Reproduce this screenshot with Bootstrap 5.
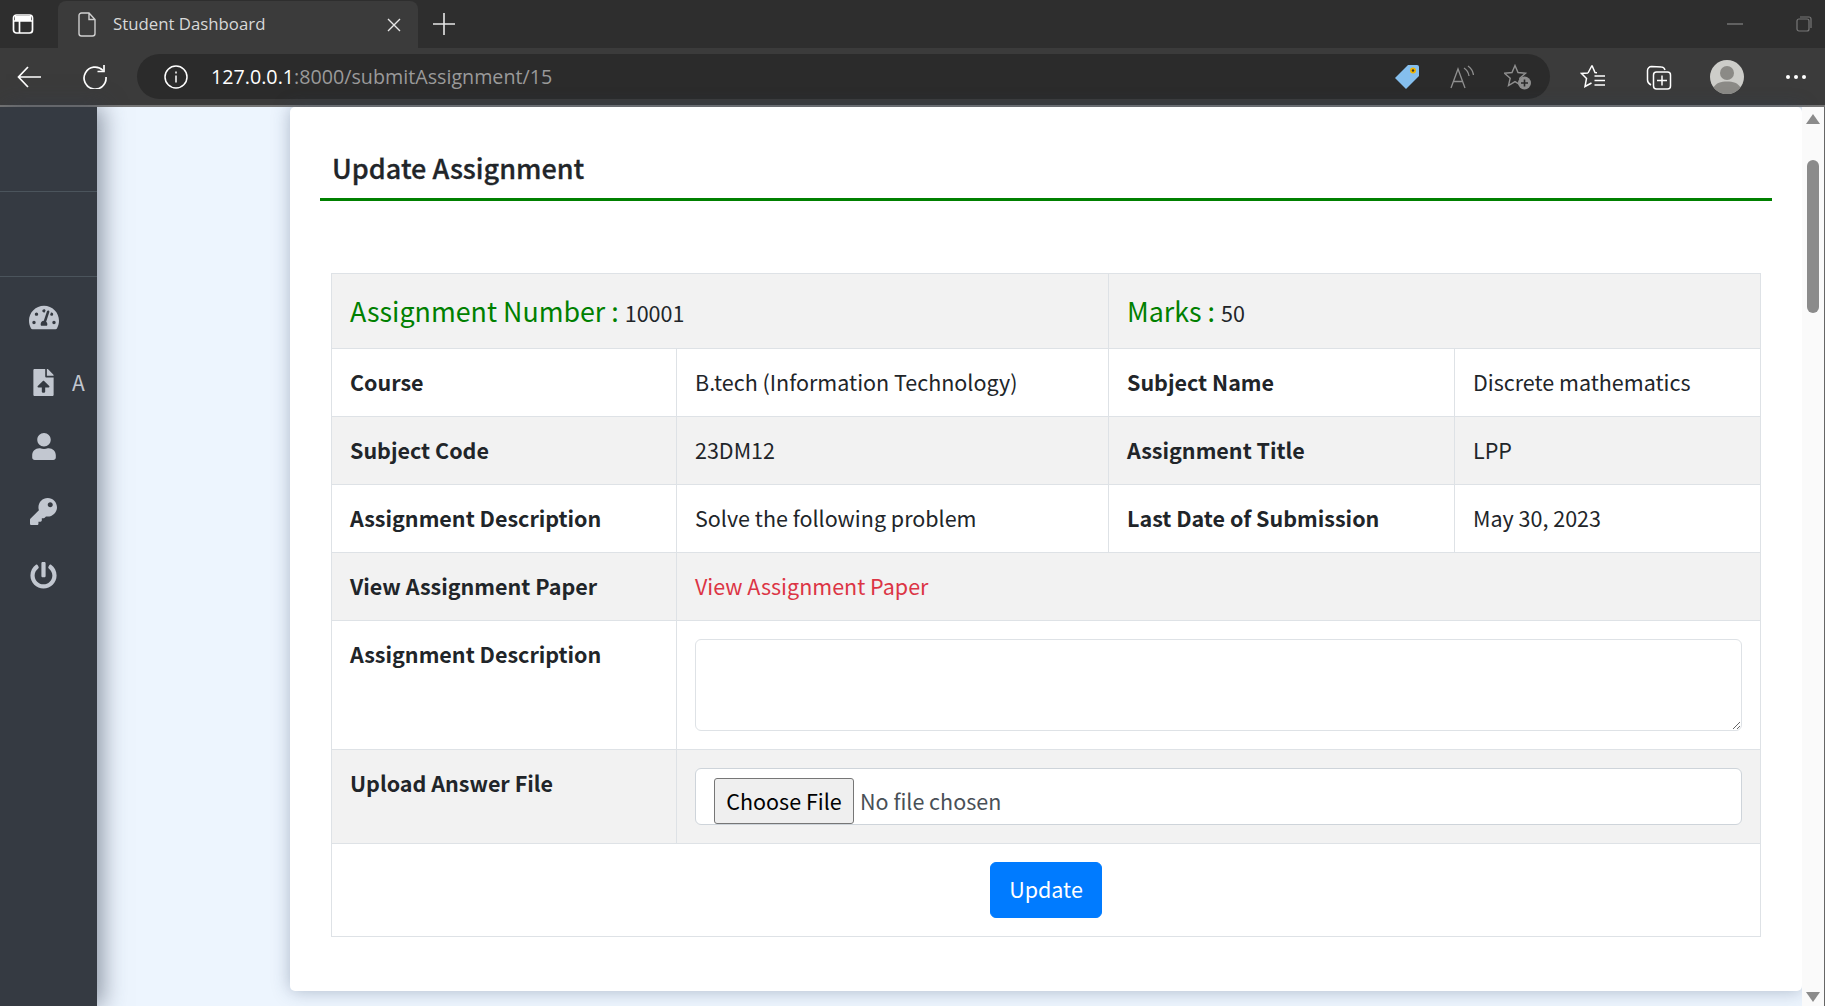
<!DOCTYPE html>
<html lang="en">
<head>
  <meta charset="UTF-8">
  <title>Student Dashboard</title>
  <link href="https://cdn.jsdelivr.net/npm/bootstrap@5.3.3/dist/css/bootstrap.min.css" rel="stylesheet">
  <style>
    html, body { height: 100%; }
    body { overflow: hidden; background: #edf5fe; font-family: "Noto Sans CJK SC", "Source Sans Pro", sans-serif; color: #212529; }

    /* browser frame */
    .tab-strip { height: 48px; background: #2e2e2e; font-family: "Open Sans", sans-serif; color: #d8d8d8; }
    .strip-btn { width: 58px; padding-left: 12px; }
    .active-tab { width: 360px; height: 47px; margin-top: 1px; background: #3b3b3b; border-radius: 8px 8px 0 0; padding: 0 17px 0 19px; font-size: 16.8px; }
    .tab-title { margin: 0 0 2px 16px; }
    .new-tab { margin-left: 15px; }
    .win-btns { margin-left: auto; padding-right: 13px; gap: 53px; }
    .tool-bar { height: 59px; background: #3b3b3b; border-bottom: 2px solid #757575; padding: 0 17px; }
    .nav-btns { gap: 42px; width: 120px; }
    .addr-pill { width: 1413px; height: 45px; background: #2b2b2b; border-radius: 23px; padding: 0 18px 0 27px; font-family: "Open Sans", sans-serif; font-size: 19.7px; }
    .addr-host { color: #fff; margin-left: 23px; }
    .addr-path { color: #9a9a9a; }
    .addr-icons { margin-left: auto; gap: 30px; }
    .tool-icons { margin-left: 30px; gap: 40px; }
    .avatar-pic { width: 34px; height: 34px; margin: 0 2px 0 -2px; }

    /* page */
    .page-area { height: 899px; }
    .side-bar { width: 97px; background: #353a42; box-shadow: 6px 0 22px rgba(50, 60, 80, .5); z-index: 2; color: #c2c7d0; }
    .side-block { height: 85px; border-bottom: 1px solid #4b545c; }
    .side-menu { padding-top: 24.5px; gap: 32.6px; }
    .side-item { height: 32px; }
    .side-icon { width: 43px; margin-left: 22px; text-align: center; }
    .side-item svg { fill: #c2c7d0; display: block; margin: 0 auto; }
    .side-label { font-size: 21px; margin: 2px 0 0 7px; }
    .content-area { padding-left: 193px; }
    .main-sheet { width: 1512px; height: 884px; background: #fff; border-radius: 5px; box-shadow: 0 0 18px rgba(50, 70, 100, .35); padding: 24px 30px 0 30px; }
    .sheet-title { font-size: 27px; font-weight: 500; -webkit-text-stroke: .3px #212529; line-height: 44px; padding: 15px 12px 0; border-bottom: 3px solid green; margin: 0; height: 70px; }
    .detail-table { width: 1430px; margin: 72px 0 0 11px; table-layout: fixed; font-size: 21.5px; --bs-table-striped-bg: #f2f2f2; --bs-table-color: #212529; --bs-table-striped-color: #212529; }
    .detail-table td { padding: 16px 18px 18px; line-height: 33px; vertical-align: top; }
    .detail-table .bold-cell { font-weight: 600; }
    .detail-table .form-row td { padding-top: 18px; padding-bottom: 18px; }
    .detail-table .form-row .bold-cell { padding-top: 16px; }
    .detail-table .num-row td { padding: 20px 18px 18px; line-height: 34px; }
    .num-head { font-size: 26.8px; color: green; }
    .paper-link { color: #dc3545; text-decoration: none; }
    .answer-box { height: 92px; border-radius: 6px; font-size: 21.5px; }
    .file-box { height: 57px; background: #fff; border: 1px solid #ced4da; border-radius: 6px; padding: 9px 0 0 18px; line-height: 30px; color: #495057; }
    .file-btn { display: inline-block; width: 140px; height: 46px; background: #efefef; border: 1px solid #767676; border-radius: 3px; color: #000; text-align: center; line-height: 43px; margin-right: 6px; }
    .update-btn { width: 112px; height: 56px; background: #007bff; border-color: #007bff; font-size: 21.5px; border-radius: 6px; padding: 0 0 2px; }
    .scroll-rail { width: 23px; background: #fafafa; border-right: 1px solid #666; z-index: 3; padding: 7px 0 4px; }
    .scroll-thumb { width: 12px; height: 153px; background: #8b8b8b; border-radius: 6px; margin-top: 36px; }
  </style>
</head>
<body class="d-flex flex-column">

<!-- tab strip -->
<div class="tab-strip d-flex align-items-start flex-shrink-0">
  <div class="strip-btn d-flex align-items-center h-100">
    <svg width="22" height="22" viewBox="0 0 22 22" fill="none" stroke="#fff" stroke-width="1.7"><rect x="1.500" y="2" width="19" height="18" rx="3"/><path d="M1.500 8h19M7.500 8v12"/><path d="M3 3h16v5H3z" fill="#fff" stroke="none"/></svg>
  </div>
  <div class="active-tab d-flex align-items-center">
    <svg width="20" height="25" viewBox="0 0 20 25" fill="none" stroke="#cfcfcf" stroke-width="1.4"><path d="M2 3.500a2.500 2.500 0 0 1 2.500-2.500H12l6 6.500v14a2.500 2.500 0 0 1-2.500 2.500h-11A2.500 2.500 0 0 1 2 21.500zM12 1v6.500h6"/></svg>
    <span class="tab-title">Student Dashboard</span>
    <svg class="ms-auto" width="14" height="14" viewBox="0 0 14 14" stroke="#e6e6e6" stroke-width="1.4"><path d="M1 1l12 12M13 1L1 13"/></svg>
  </div>
  <div class="new-tab d-flex align-items-center h-100">
    <svg width="22" height="22" viewBox="0 0 22 22" stroke="#e6e6e6" stroke-width="1.6"><path d="M11 0v22M0 11h22"/></svg>
  </div>
  <div class="win-btns d-flex align-items-center h-100">
    <svg width="16" height="2" viewBox="0 0 16 2" stroke="#777" stroke-width="1.4"><path d="M0 1h16"/></svg>
    <svg width="16" height="16" viewBox="0 0 16 16" fill="none" stroke="#777" stroke-width="1.2"><rect x="1" y="3" width="12" height="12" rx="2"/><path d="M4 1h9a2 2 0 0 1 2 2v9"/></svg>
  </div>
</div>

<!-- address bar -->
<div class="tool-bar d-flex align-items-center flex-shrink-0">
  <div class="nav-btns d-flex align-items-center">
    <svg width="24" height="22" viewBox="0 0 24 22" fill="none" stroke="#fff" stroke-width="1.7"><path d="M24 11H2M11 1L1.500 11l9.500 10"/></svg>
    <svg width="24" height="24" viewBox="0 0 24 24" fill="none" stroke="#fff" stroke-width="1.7"><path d="M20 5.500A11 11 0 1 0 23 12"/><path d="M21 0v6.500h-6.500"/></svg>
  </div>
  <div class="addr-pill d-flex align-items-center">
    <svg width="24" height="24" viewBox="0 0 24 24" fill="none" stroke="#fff" stroke-width="1.5"><circle cx="12" cy="12" r="11"/><path d="M12 10.500v7M12 6.500v2"/></svg>
    <span class="addr-host">127.0.0.1<span class="addr-path">:8000/submitAssignment/15</span></span>
    <div class="addr-icons d-flex align-items-center">
      <svg width="26" height="26" viewBox="0 0 26 26"><path d="M14 1h9a2 2 0 0 1 2 2v9L12 25 1 14z" fill="#85bfee"/><circle cx="19" cy="6.500" r="3" fill="#f0b400"/><circle cx="19" cy="6.500" r="1.200" fill="#333"/></svg>
      <svg width="24" height="24" viewBox="0 0 24 24" fill="none" stroke="#8f8f8f" stroke-width="1.3"><path d="M1 23L8 4l7 19M3.500 16.500h9M14 3c3 2 4.500 4.500 5 8M18 1c3 2 5 5 5.500 9"/></svg>
      <svg width="28" height="26" viewBox="0 0 28 26"><path d="M11 1.500l3 7 7.500.7-5.700 5 1.700 7.300L11 17.600 4.500 21.500l1.700-7.300-5.700-5L8 8.500z" fill="none" stroke="#8f8f8f" stroke-width="1.4"/><circle cx="20.500" cy="19" r="6.500" fill="#8f8f8f"/><path d="M20.500 15.500v7M17 19h7" stroke="#2b2b2b" stroke-width="1.600"/></svg>
    </div>
  </div>
  <div class="tool-icons d-flex align-items-center">
    <svg width="26" height="26" viewBox="0 0 26 26" fill="none" stroke="#fff" stroke-width="1.5"><path d="M12 1.500l3 7 2 .2M8 9l-6.500.5 5 5-1.500 8 6.500-3.500M14.500 12H25M14.500 16.500H25M14.500 21H25M8 9l4-7.500"/></svg>
    <svg width="26" height="26" viewBox="0 0 26 26" fill="none" stroke="#fff" stroke-width="1.5"><path d="M5 21C3 20 1.500 18 1.500 16V6.500a4 4 0 0 1 4-4l10 .5c2 0 3 1.500 3.500 3"/><rect x="7.500" y="8" width="17" height="17" rx="3"/><path d="M16 11.500v10M11 16.500h10"/></svg>
    <svg class="avatar-pic" viewBox="0 0 34 34"><circle cx="17" cy="17" r="17" fill="#cdcdc9"/><circle cx="17" cy="13" r="7" fill="#8b8a86"/><path d="M3.500 27.500C6 23 11 21.500 17 21.500S28 23 30.500 27.500A17 17 0 0 1 3.500 27.500z" fill="#8b8a86"/></svg>
    <svg width="20" height="4" viewBox="0 0 20 4" fill="#fff"><circle cx="2" cy="2" r="2"/><circle cx="10" cy="2" r="2"/><circle cx="18" cy="2" r="2"/></svg>
  </div>
</div>

<!-- page -->
<div class="page-area d-flex flex-shrink-0">
  <div class="side-bar flex-shrink-0">
    <div class="side-block"></div>
    <div class="side-block"></div>
    <div class="side-menu d-flex flex-column">
      <div class="side-item d-flex align-items-center"><div class="side-icon">
        <svg width="30" height="27" viewBox="0 0 576 512"><path d="M288 32C128.94 32 0 160.94 0 320c0 52.8 14.25 102.26 39.06 144.8 5.61 9.62 16.3 15.2 27.44 15.2h443c11.14 0 21.83-5.58 27.44-15.2C561.75 422.26 576 372.8 576 320c0-159.06-128.94-288-288-288zm0 64c14.71 0 26.58 10.13 30.32 23.65-1.11 2.26-2.64 4.23-3.45 6.67l-9.22 27.67c-5.13 3.49-10.97 6.01-17.64 6.01-17.67 0-32-14.33-32-32S270.33 96 288 96zM96 384c-17.67 0-32-14.33-32-32s14.33-32 32-32 32 14.33 32 32-14.33 32-32 32zm48-160c-17.67 0-32-14.33-32-32s14.33-32 32-32 32 14.33 32 32-14.33 32-32 32zm246.77-72.41l-61.33 184C343.13 347.33 352 364.54 352 384c0 11.72-3.38 22.55-8.88 32H232.88c-5.5-9.45-8.88-20.28-8.88-32 0-33.94 26.5-61.43 59.9-63.59l61.34-184.01c4.17-12.56 17.73-19.45 30.36-15.17 12.57 4.19 19.35 17.77 15.17 30.36zm14.66 57.2l15.52-46.55c3.47-1.29 7.13-2.23 11.05-2.23 17.67 0 32 14.33 32 32s-14.33 32-32 32c-11.38-.01-20.89-6.28-26.57-15.22zM480 384c-17.67 0-32-14.33-32-32s14.33-32 32-32 32 14.33 32 32-14.33 32-32 32z"/></svg>
      </div></div>
      <div class="side-item d-flex align-items-center"><div class="side-icon">
        <svg width="21" height="27" viewBox="0 0 384 512"><path d="M224 136V0H24C10.7 0 0 10.7 0 24v464c0 13.3 10.7 24 24 24h336c13.3 0 24-10.7 24-24V160H248c-13.2 0-24-10.8-24-24zm65.18 216.01H224v80c0 8.84-7.16 16-16 16h-32c-8.84 0-16-7.16-16-16v-80H94.82c-14.28 0-21.41-17.29-11.27-27.36l96.42-95.7c6.65-6.61 17.39-6.61 24.04 0l96.42 95.7c10.15 10.07 3.03 27.36-11.25 27.36zM377 105L279.1 7c-4.5-4.5-10.6-7-17-7H256v128h128v-6.1c0-6.3-2.5-12.4-7-16.9z"/></svg>
      </div><span class="side-label">A</span></div>
      <div class="side-item d-flex align-items-center"><div class="side-icon">
        <svg width="24" height="27" viewBox="0 0 448 512"><path d="M224 256c70.7 0 128-57.3 128-128S294.7 0 224 0 96 57.3 96 128s57.3 128 128 128zm89.6 32h-16.7c-22.2 10.2-46.9 16-72.9 16s-50.6-5.8-72.9-16h-16.7C60.2 288 0 348.2 0 422.4V464c0 26.5 21.5 48 48 48h352c26.5 0 48-21.5 48-48v-41.6c0-74.2-60.2-134.4-134.4-134.4z"/></svg>
      </div></div>
      <div class="side-item d-flex align-items-center"><div class="side-icon">
        <svg width="27" height="27" viewBox="0 0 512 512"><path d="M512 176.001C512 273.203 433.202 352 336 352c-11.22 0-22.19-1.062-32.827-3.069l-24.012 27.014A23.999 23.999 0 0 1 261.223 384H224v40c0 13.255-10.745 24-24 24h-40v40c0 13.255-10.745 24-24 24H24c-13.255 0-24-10.745-24-24v-78.059c0-6.365 2.529-12.47 7.029-16.971l161.802-161.802C163.108 213.814 160 195.271 160 176 160 78.798 238.797.001 335.999 0 433.488-.001 512 78.511 512 176.001zM336 128c0 26.51 21.49 48 48 48s48-21.49 48-48-21.49-48-48-48-48 21.49-48 48z"/></svg>
      </div></div>
      <div class="side-item d-flex align-items-center"><div class="side-icon">
        <svg width="27" height="27" viewBox="0 0 512 512"><path d="M400 54.1c63 45 104 118.6 104 201.9 0 136.8-110.8 247.7-247.5 248C120 504.3 8.2 393 8 256.4 7.9 173.1 48.9 99.3 111.8 54.2c11.7-8.3 28-4.8 35 7.7L162.6 90c5.9 10.5 3.1 23.8-6.6 31-41.5 30.8-68 79.6-68 134.9-.1 92.3 74.5 168.1 168 168.1 91.6 0 168.6-74.2 168-169.1-.3-51.8-24.7-101.8-68.1-134-9.7-7.2-12.4-20.5-6.4-30.9l15.8-28.1c7-12.4 23.2-16.1 34.8-7.9zM296 264V24c0-13.3-10.7-24-24-24h-32c-13.3 0-24 10.7-24 24v240c0 13.3 10.7 24 24 24h32c13.3 0 24-10.7 24-24z"/></svg>
      </div></div>
    </div>
  </div>

  <div class="content-area flex-shrink-0">
    <div class="main-sheet">
      <h2 class="sheet-title">Update Assignment</h2>
      <table class="table table-bordered table-striped detail-table mb-0">
        <colgroup><col style="width:345px"><col style="width:432px"><col style="width:346px"><col></colgroup>
        <tbody>
          <tr class="num-row">
            <td colspan="2"><span class="num-head">Assignment Number : </span>10001</td>
            <td colspan="2"><span class="num-head">Marks : </span>50</td>
          </tr>
          <tr>
            <td class="bold-cell">Course</td><td>B.tech (Information Technology)</td>
            <td class="bold-cell">Subject Name</td><td>Discrete mathematics</td>
          </tr>
          <tr>
            <td class="bold-cell">Subject Code</td><td>23DM12</td>
            <td class="bold-cell">Assignment Title</td><td>LPP</td>
          </tr>
          <tr>
            <td class="bold-cell">Assignment Description</td><td>Solve the following problem</td>
            <td class="bold-cell">Last Date of Submission</td><td>May 30, 2023</td>
          </tr>
          <tr>
            <td class="bold-cell">View Assignment Paper</td>
            <td colspan="3"><a class="paper-link" href="#">View Assignment Paper</a></td>
          </tr>
          <tr class="form-row">
            <td class="bold-cell">Assignment Description</td>
            <td colspan="3"><textarea class="form-control answer-box d-block"></textarea></td>
          </tr>
          <tr class="form-row">
            <td class="bold-cell">Upload Answer File</td>
            <td colspan="3"><div class="file-box"><span class="file-btn">Choose File</span>No file chosen</div></td>
          </tr>
          <tr class="form-row">
            <td colspan="4" class="text-center"><button class="btn btn-primary update-btn d-block mx-auto" type="button">Update</button></td>
          </tr>
        </tbody>
      </table>
    </div>
  </div>

  <div class="scroll-rail d-flex flex-column align-items-center flex-shrink-0">
    <svg width="14" height="10" viewBox="0 0 14 10" fill="#8b8b8b"><path d="M7 0l7 10H0z"/></svg>
    <div class="scroll-thumb"></div>
    <svg class="mt-auto" width="14" height="10" viewBox="0 0 14 10" fill="#8b8b8b"><path d="M0 0h14L7 10z"/></svg>
  </div>
</div>

</body>
</html>
